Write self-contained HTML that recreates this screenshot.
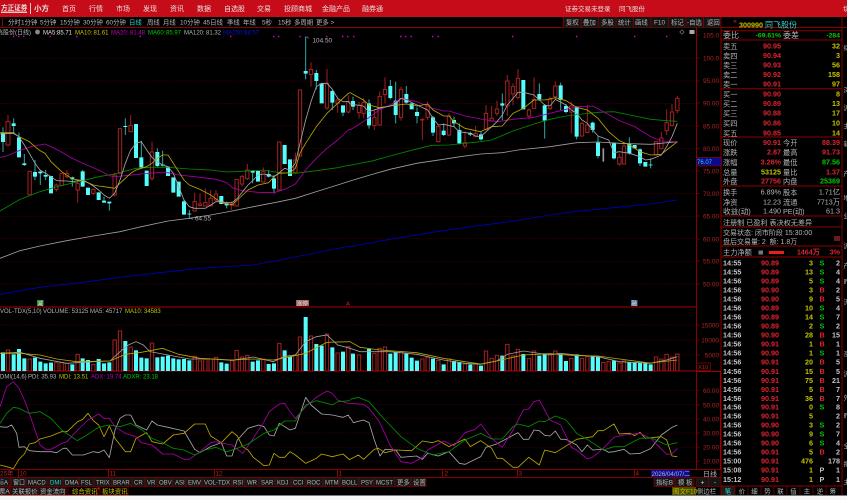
<!DOCTYPE html>
<html><head><meta charset="utf-8"><style>
html,body{margin:0;padding:0;background:#f6f6f6}
svg{display:block;position:absolute;left:0;top:0;filter:blur(.33px)}
text{font-family:"Liberation Sans","Noto Sans CJK SC",sans-serif;font-size:6.4px;fill:#b4b4b4;white-space:pre}
.w{fill:#e8e0e0}.g{fill:#b4b4b4}.r{fill:#dc2430}.y{fill:#c4c400}.l{fill:#00cc00}.c{fill:#35d0d0}.m{fill:#c000c0}.b{fill:#1010d0}.a{fill:#b02424}
.p text,text.p{font-size:7.2px}
.k{font-size:8px}
.e{text-anchor:end}.mid{text-anchor:middle}
.h text{font-size:6px}
.t text{font-weight:bold;fill:#c4c4c4}.t text.r{fill:#e02430}.t text.y{fill:#c4c400}.t text.l{fill:#00cc00}
polyline{stroke-width:2.5}
polyline[stroke="#b8b8b8"]{stroke:#a6a6a6}
polyline[stroke="#c4c4c4"]{stroke:#a0a0a0}
polyline[stroke="#b0b0b0"]{stroke:#a0a0a0}
</style></head><body>
<svg width="847" height="500" viewBox="0 0 847 500" xmlns="http://www.w3.org/2000/svg">
<rect width="847" height="495.5" fill="#000"/>
<rect y="495.5" width="847" height="5" fill="#f6f6f6"/>
<rect width="847" height="17" fill="#c60c18"/>
<!-- logo -->
<text x="1" y="10" class="w" style="font-size:6.6px;font-weight:bold">方正证券</text>
<rect x="1" y="11.5" width="26" height="1.500" fill="#e8c8c8"/>
<rect x="30" y="3" width="1" height="11" fill="#e8c8c8"/>
<text x="34" y="11" class="w" style="font-size:7.500px;font-weight:bold">小方</text>
<g>
<text x="62" y="11" class="w" style="font-size:7px">首页</text><text x="89" y="11" class="w" style="font-size:7px">行情</text><text x="116" y="11" class="w" style="font-size:7px">市场</text><text x="143" y="11" class="w" style="font-size:7px">发现</text><text x="170" y="11" class="w" style="font-size:7px">资讯</text><text x="197" y="11" class="w" style="font-size:7px">数据</text><text x="224" y="11" class="w" style="font-size:7px">自选股</text><text x="257" y="11" class="w" style="font-size:7px">交易</text><text x="284" y="11" class="w" style="font-size:7px">投顾商城</text><text x="322" y="11" class="w" style="font-size:7px">金融产品</text><text x="362" y="11" class="w" style="font-size:7px">融券通</text>
<text x="565" y="11" class="w" style="font-size:6.500px">证券交易未登录</text><text x="619" y="11" class="w" style="font-size:6.500px">同飞股份</text><text x="843" y="11" class="w" style="font-size:6.500px">切</text>
</g>
<!-- period row -->
<path d="M0 27.500H847" stroke="#8a0000" stroke-width="1"/>
<rect x="2" y="18" width="1" height="8" fill="#8a0000"/>
<g>
<text x="8" y="24.500">分时</text><text x="21" y="24.500">1分钟</text><text x="40" y="24.500">5分钟</text><text x="60" y="24.500">15分钟</text><text x="83" y="24.500">30分钟</text><text x="106" y="24.500">60分钟</text><text x="129" y="24.500" class="c">日线</text><text x="147" y="24.500">周线</text><text x="163" y="24.500">月线</text><text x="180" y="24.500">10分钟</text><text x="203" y="24.500">45日线</text><text x="227" y="24.500">季线</text><text x="243" y="24.500">年线</text><text x="262" y="24.500">5秒</text><text x="278" y="24.500">15秒</text><text x="294" y="24.500">多周期</text><text x="316" y="24.500">更多 &gt;</text>
</g>
<rect x="563" y="17" width="158" height="10.500" fill="#141414"/>
<path d="M563.500 17V27M581 17V27M598.500 17V27M616 17V27M633.500 17V27M651 17V27M668.500 17V27M686 17V27M703.500 17V27M721 17V40" stroke="#7a0000"/>
<g>
<text x="566" y="24.500">复权</text><text x="583" y="24.500">叠加</text><text x="601" y="24.500">多股</text><text x="618" y="24.500">统计</text><text x="635" y="24.500">画线</text><text x="654" y="24.500">F10</text><text x="671" y="24.500">标记</text><text x="687" y="24.500">-自选</text><text x="707" y="24.500">返回</text>
</g>
<!-- MA header -->
<g class="h">
<text x="-3" y="34.500">飞股份(日线)</text>
<text x="43" y="34.500" class="w">MA5:</text><text x="57" y="34.500" class="w">85.71</text>
<text x="75" y="34.500" class="y">MA10:</text><text x="93.500" y="34.500" class="y">81.61</text>
<text x="111" y="34.500" class="m">MA20:</text><text x="130" y="34.500" class="m">81.48</text>
<text x="148" y="34.500" class="l">MA60:</text><text x="166" y="34.500" class="l">85.97</text>
<text x="184" y="34.500">MA120:</text><text x="206" y="34.500">81.32</text>
<text x="223" y="34.500" class="b">MA250:</text><text x="244" y="34.500" class="b">68.57</text>
</g>
<circle cx="37.500" cy="32" r="2.400" fill="#888"/>
<path d="M682 29.800l2.200 2.200-2.200 2.200-2.200-2.200z" fill="none" stroke="#888" stroke-width=".6"/>
<rect x="689.500" y="30" width="5" height="4" fill="#aaa"/>
<!-- purple markers -->
<path d="M13 36.500h1.400M18 36.500h1.400M23 36.500h1.400M49.500 36.500h1.400M76 36.500h1.400M139.500 36.500h1.400M230 36.500h1.400M273 36.500h1.400M278 36.500h1.400M299.500 36.500h1.400M326 36.500h1.400M342 36.500h1.400M347 36.500h1.400M353 36.500h1.400M400 36.500h1.400M405 36.500h1.400M410.500 36.500h1.400M432 36.500h1.400M437.500 36.500h1.400M512 36.500h1.400M576 36.500h1.400M634 36.500h1.400M666 36.500h1.400" stroke="#d000d0" stroke-width="1.400"/>
<!-- grid -->
<g stroke="#4a0000" stroke-width=".7" stroke-dasharray="1 1.200">
<path d="M0 58.700H696M0 81H696M0 103.400H696M0 126H696M0 148.500H696M0 171H696M0 193.700H696M0 216.300H696M0 238.700H696M0 261.300H696M0 284H696"/>
<path d="M0 325H696M0 340H696M0 355H696"/>
<path d="M0 390.700H696M0 404.700H696M0 418.700H696M0 433H696M0 447.300H696M0 461.300H696"/>
</g>
<!-- candles left -->
<g transform="translate(0,30) scale(.33333)">
<path fill="none" stroke="#a31e1e" stroke-width="3" d="M24 255V350M169 460V485M201 420V445M233 450V518M280 475V495M344 428V500M392 255V305M456 335V452M584 488V545M600 490V530M616 475V530M632 480V528M648 480V515M694 515V540M726 435V470M742 402V450M790 412V458M886 368V430M933 97V170M981 117V240M1013 200V248M1045 195V250"/>
<path fill="none" stroke="#2ea8a8" stroke-width="3" d="M9 292V366M41 265V310M57 308V382M73 372V408M105 390V450M121 420V465M137 420V450M217 440V470M248 420V470M312 500V518M328 515V542M376 265V315M424 332V415M472 355V412M488 362V410M552 508V554M568 540V565M680 515V535M758 420V460M806 420V442M822 435V490M917 22V148M949 120V178M997 180V240M1029 226V258"/>
<path fill="#000" stroke="#a52222" stroke-width="3" d="M18 275h12v70h-12zM84 424h10v70h-10zM164 465h10v13h-10zM180 430h10v36h-10zM196 430h10v10h-10zM228 460h10v20h-10zM275 478h10v12h-10zM339 435h10v60h-10zM355 296h10v134h-10zM387 286h10v19h-10zM451 366h10v79h-10zM579 515h10v28h-10zM595 522h10v4h-10zM611 518h10v10h-10zM627 505h10v23h-10zM643 492h10v18h-10zM691 523h10v3h-10zM705 448h10v80h-10zM721 440h10v22h-10zM737 420h10v26h-10zM785 425h10v31h-10zM833 336h10v144h-10zM881 390h10v38h-10zM895 180h10v198h-10zM928 118h10v16h-10zM976 160h10v74h-10zM1008 210h10v10h-10zM1040 215h10v31h-10z"/>
<path fill="none" stroke="#54fcfc" stroke-width="12" d="M9 308V336M41 280V288M57 322V382M73 400V405M105 426V440M121 425V430M137 435V440M153 438V490M217 442V448M248 424V470M264 473V495M296 487V510M312 512V518M328 515V520M376 288V291M408 282V384M424 382V412M440 422V468M472 366V408M488 404V407M504 410V438M520 442V488M536 455V500M552 514V554M568 551V553M664 498V522M680 520V526M758 423V428M774 423V455M806 432V440M822 445V476M854 345V402M870 388V438M917 123V131M949 129V153M965 160V220M997 183V218M1029 226V248"/>
</g>
<!-- candles right -->
<g transform="translate(350,30) scale(.33333)">
<path fill="none" stroke="#a31e1e" stroke-width="3" d="M27 215V265M41 205V265M73 240V300M89 185V285M105 142V220M153 170V272M217 265V330M233 215V270M265 285V338M297 250V318M345 305V355M377 288V322M408 225V300M425 228V275M441 212V258M472 135V258M489 160V225M504 117V208M537 235V268M552 142V235M600 200V240M616 155V208M664 215V310M696 275V320M712 225V310M808 370V408M822 340V402M934 305V358M950 238V315M966 222V290M982 198V250"/>
<path fill="none" stroke="#2ea8a8" stroke-width="3" d="M9 200V240M57 208V296M121 150V208M137 155V280M169 168V220M201 232V280M249 258V318M281 280V318M312 260V290M328 280V342M361 305V318M393 305V332M457 190V270M568 160V212M584 222V326M632 158V240M648 222V250M680 228V328M728 275V308M744 320V385M792 338V388M838 322V374M870 355V408M902 385V415"/>
<path fill="none" stroke="#999" stroke-width="5" d="M760 355V395"/>
<path fill="#000" stroke="#a52222" stroke-width="3" d="M22 225h10v23h-10zM36 218h10v32h-10zM68 263h10v24h-10zM84 200h10v85h-10zM100 178h10v16h-10zM148 178h10v84h-10zM212 268h10v2h-10zM228 225h10v37h-10zM260 290h10v45h-10zM292 258h10v57h-10zM340 338h10v10h-10zM372 310h10v10h-10zM403 250h10v48h-10zM420 265h10v8h-10zM436 237h10v13h-10zM467 153h10v75h-10zM484 170h10v22h-10zM499 145h10v58h-10zM532 240h10v18h-10zM547 208h10v27h-10zM595 208h10v28h-10zM611 168h10v32h-10zM659 228h10v18h-10zM691 280h10v38h-10zM707 285h10v22h-10zM803 382h10v20h-10zM817 348h10v54h-10zM913 335h10v40h-10zM929 324h10v32h-10zM945 278h10v24h-10zM961 246h10v40h-10zM977 205h10v37h-10z"/>
<path fill="none" stroke="#54fcfc" stroke-width="12" d="M9 213V230M57 220V286M121 168V204M137 212V255M169 192V218M185 220V238M201 246V258M249 262V308M281 302V315M312 270V280M328 300V340M361 309V314M393 313V328M457 220V227M520 150V238M568 192V208M584 226V272M632 166V210M648 228V246M680 230V320M728 278V300M744 338V378M792 338V385M838 342V370M854 345V355M870 358V400M886 396V410M902 404V406"/>
</g>
<!-- MA lines -->
<g fill="none" stroke-linejoin="round">
<g transform="translate(0,30) scale(.33333)">
<polyline stroke="#0000b8" points="0,793 120,772 240,758 360,742 480,728 600,715 760,705 900,678 1050,648"/>
<polyline stroke="#c4c4c4" points="0,685 60,662 120,648 200,632 280,618 360,605 424,590 504,573 568,565 632,555 696,543 760,530 838,515 886,505 949,485 1013,465 1050,453"/>
<polyline stroke="#008a00" points="0,543 60,508 120,485 170,470 248,452 296,440 344,432 408,415 456,412 504,412 568,417 632,420 680,426 728,424 790,420 838,428 886,430 949,422 1013,413 1050,405"/>
<polyline stroke="#a800a8" points="0,382 20,378 57,362 100,348 135,342 170,358 217,385 260,405 296,420 328,437 344,440 376,437 424,432 472,428 504,428 536,435 600,442 648,448 680,458 700,475 728,482 774,487 822,488 854,478 886,462 917,420 949,385 981,355 1013,330 1045,300 1050,298"/>
<polyline stroke="#b8a800" points="0,308 40,308 57,320 88,335 105,350 120,362 135,370 153,395 185,425 217,447 248,452 280,465 296,468 312,470 344,475 360,460 376,445 392,430 408,420 424,415 440,410 456,400 472,385 488,375 504,375 520,400 536,425 552,450 568,465 600,478 632,495 664,518 696,524 712,510 728,495 744,480 774,465 806,458 822,440 838,430 870,428 886,415 900,370 917,340 949,290 981,250 1013,220 1045,190 1050,188"/>
<polyline stroke="#b8b8b8" points="0,312 40,310 57,320 73,345 88,370 105,400 120,420 153,440 170,452 201,453 217,455 233,452 248,450 264,458 280,468 296,480 312,495 328,505 344,490 360,450 376,400 392,360 408,340 424,335 440,360 456,382 472,395 488,405 504,410 520,430 536,470 552,510 568,530 584,535 600,535 616,535 632,525 648,515 664,515 680,518 696,518 712,505 728,485 744,465 760,450 774,435 790,432 806,435 822,440 838,428 854,415 870,420 886,400 900,340 917,270 933,215 949,170 965,160 981,160 997,178 1013,205 1029,215 1045,215 1050,222"/>
</g>
<g transform="translate(350,30) scale(.33333)">
<polyline stroke="#0000b8" points="0,650 120,628 240,608 360,590 480,575 600,555 680,544 760,536 900,522 982,510"/>
<polyline stroke="#c4c4c4" points="0,453 60,435 120,418 200,400 280,388 330,380 392,372 457,368 504,360 600,350 680,338 744,336 808,340 902,343 982,335"/>
<polyline stroke="#008a00" points="0,406 70,392 120,378 180,362 245,346 297,345 345,340 392,335 425,330 489,303 552,282 600,268 648,258 696,252 744,247 792,245 840,255 902,268 950,272 982,274"/>
<polyline stroke="#a800a8" points="0,300 40,275 88,240 120,225 153,205 200,215 248,235 281,243 297,243 345,258 392,267 441,275 489,268 520,265 552,262 600,250 648,238 680,230 728,228 760,245 808,272 854,290 902,320 934,333 982,335"/>
<polyline stroke="#b8a800" points="0,188 40,210 57,225 88,233 120,228 169,222 201,228 233,222 249,240 281,258 297,258 312,275 345,295 392,305 425,290 457,288 489,250 520,235 552,210 584,210 616,203 648,212 680,232 712,240 744,265 776,305 808,332 838,345 870,365 902,375 934,373 950,360 982,335"/>
<polyline stroke="#b8b8b8" points="0,222 40,228 57,245 88,235 120,228 137,222 153,205 169,210 201,225 233,240 249,265 265,285 281,283 312,290 328,305 361,310 377,318 392,320 408,305 425,290 441,275 457,255 472,225 489,205 504,187 520,187 552,195 568,210 584,225 600,228 616,208 648,225 664,240 680,250 696,270 712,280 728,300 744,318 776,330 792,368 808,365 838,370 870,380 886,390 902,388 934,375 950,350 966,320 982,280"/>
</g>
</g>
<!-- annotations -->
<path d="M305.500 38V37h2l1 1.500" stroke="#aaa" stroke-width=".6" fill="none"/>
<text x="312.500" y="42.500" class="g">104.50</text>
<path d="M189 218.500h2l2 .8" stroke="#aaa" stroke-width=".6" fill="none"/>
<text x="195" y="220.500" class="g">64.55</text>
<!-- volume pane -->
<g transform="translate(0,295) scale(.33333)">
<path d="M0 36H2088M0 228H2088" stroke="#8a0000" stroke-width="3.500"/>
<g fill="none" stroke="#a52222" stroke-width="3">
<path d="M19 228V165h10V228M84 228V192h10V228M164 228V203h10V228M180 228V203h10V228M196 228V205h10V228M228 228V178h10V228M275 228V208h10V228M339 228V135h10V228M355 228V108h10V228M387 228V156h10V228M451 228V144h10V228M579 228V184h10V228M595 228V198h10V228M611 228V192h10V228M627 228V192h10V228M643 228V187h10V228M691 228V197h10V228M705 228V166h10V228M721 228V186h10V228M737 228V181h10V228M785 228V192h10V228M833 228V145h10V228M881 228V180h10V228M895 228V126h10V228M928 228V123h10V228M976 228V117h10V228M1008 228V174h10V228M1040 228V155h10V228"/>
<path transform="translate(1050,0)" d="M22 228V180h10V228M68 228V175h10V228M84 228V160h10V228M100 228V156h10V228M148 228V170h10V228M212 228V192h10V228M228 228V188h10V228M260 228V196h10V228M292 228V192h10V228M340 228V207h10V228M372 228V205h10V228M403 228V168h10V228M420 228V190h10V228M436 228V181h10V228M467 228V148h10V228M484 228V183h10V228M499 228V163h10V228M532 228V191h10V228M547 228V168h10V228M595 228V178h10V228M611 228V168h10V228M659 228V190h10V228M691 228V190h10V228M707 228V185h10V228M755 228V202h10V228M771 228V200h10V228M803 228V204h10V228M817 228V198h10V228M913 228V186h10V228M929 228V192h10V228M945 228V178h10V228M961 228V186h10V228M977 228V177h10V228"/>
</g>
<path fill="none" stroke="#54fcfc" stroke-width="12" d="M9 172V228M41 178V228M57 162V228M73 190V228M105 188V228M121 200V228M137 205V228M153 203V228M217 208V228M248 190V228M264 195V228M296 192V228M312 205V228M328 202V228M376 138V228M408 166V228M424 188V228M440 190V228M472 187V228M488 185V228M504 182V228M520 190V228M536 193V228M552 192V228M568 196V228M664 202V228M680 206V228M758 200V228M774 196V228M806 207V228M822 205V228M854 166V228M870 185V228M917 66V228M949 147V228M965 152V228M997 157V228M1029 170V228"/>
<path transform="translate(1050,0)" fill="none" stroke="#54fcfc" stroke-width="12" d="M9 176V228M57 162V228M121 176V228M137 172V228M169 176V228M185 188V228M201 197V228M249 191V228M281 208V228M312 198V228M328 201V228M361 208V228M393 212V228M457 182V228M520 177V228M568 182V228M584 175V228M632 178V228M648 198V228M680 178V228M728 184V228M744 186V228M792 197V228M838 202V228M854 202V228M870 202V228M886 205V228M902 208V228"/>
<g fill="none">
<polyline stroke="#b0b0b0" points="0,175 60,172 120,190 200,205 280,200 330,198 360,170 385,150 408,140 430,150 450,170 504,180 568,192 632,192 696,196 760,186 820,200 854,184 886,180 917,140 949,125 981,120 1013,150 1050,160 1080,170 1110,170 1170,170 1250,178 1330,195 1395,205 1442,208 1490,198 1522,178 1570,168 1650,180 1680,175 1730,180 1794,185 1858,200 1950,205 2000,195 2032,185"/>
<polyline stroke="#b8a800" points="0,175 60,175 120,180 170,192 230,200 330,198 376,178 424,172 488,160 536,178 600,190 696,195 760,192 820,195 870,185 917,175 949,158 981,142 1050,140 1080,157 1140,165 1250,173 1330,190 1395,200 1442,207 1490,198 1570,180 1650,176 1730,182 1794,183 1858,192 1950,204 2032,195"/>
</g>
</g>
<g class="h">
<text x="0" y="313.200">VOL-TDX(5,10)</text><text x="43" y="313.200">VOLUME: 53125</text><text x="90" y="313.200">MA5: 45717</text><text x="125" y="313.200" class="y">MA10: 34583</text>
</g>
<!-- markers -->
<rect x="37" y="300" width="6.500" height="6" fill="#2c8a3c"/><text x="37.500" y="305.500" class="w" style="font-size:5.500px">减</text>
<rect x="296" y="300" width="13" height="6" fill="#9a6060"/><text x="296.500" y="305.500" class="w" style="font-size:5.800px">涨停</text>
<text x="346" y="305.500" class="r" style="font-size:5.500px">A</text>
<rect x="631" y="300" width="6.500" height="6" fill="#4a6c9c"/><text x="631.500" y="305.500" class="w" style="font-size:5.500px">融</text>
<!-- DMI -->
<g class="h">
<text x="0" y="378.300">DMI(14,6)</text><text x="28" y="378.300">PDI: 35.93</text><text x="59" y="378.300" class="y">MDI: 13.51</text><text x="91" y="378.300" class="m">ADX: 19.74</text><text x="123" y="378.300" class="l">ADXR: 23.18</text>
</g>
<g fill="none" stroke-linejoin="round">
<g transform="translate(0,370) scale(.33333)">
<polyline stroke="#b8b8b8" points="0,170 20,172 35,165 50,190 57,232 73,230 88,242 120,245 153,245 170,248 190,235 200,235 217,255 250,255 280,245 296,248 312,240 328,263 345,180 360,145 376,135 392,135 408,165 440,180 456,153 472,165 504,172 552,183 568,210 584,238 600,248 632,230 664,218 680,258 696,258 712,210 744,175 776,165 792,170 808,195 822,198 838,160 870,180 886,175 917,82 933,105 965,132 997,135 1029,142 1045,135 1050,145"/>
<polyline stroke="#b8a800" points="0,285 20,290 40,296 57,268 73,252 88,222 105,218 120,207 153,198 185,185 201,185 217,170 233,155 248,148 264,130 280,152 296,165 312,200 328,168 345,205 376,245 392,245 408,205 440,188 456,215 488,222 520,195 552,190 584,162 616,162 632,198 664,218 696,185 712,198 728,230 744,240 760,262 792,287 808,285 822,250 838,262 854,262 870,245 886,255 917,280 949,265 965,252 997,260 1029,252 1050,270"/>
<polyline stroke="#a800a8" points="0,110 20,50 40,35 57,55 73,90 88,130 105,180 120,225 137,238 153,238 185,220 201,215 233,180 264,150 296,132 312,145 328,145 345,170 376,190 408,200 424,218 456,225 488,252 520,252 552,268 568,268 600,245 632,218 648,215 680,222 696,225 728,250 760,205 792,155 808,125 838,102 854,100 870,125 886,145 917,110 949,82 981,63 997,70 1013,90 1050,102"/>
<polyline stroke="#009000" points="0,160 20,130 40,112 57,115 88,130 120,125 153,145 185,180 232,212 264,193 296,172 328,165 360,170 392,160 424,178 456,205 488,218 520,235 552,240 584,255 616,240 648,232 680,245 712,235 744,222 792,190 822,180 854,153 886,153 917,105 949,92 981,100 997,105 1013,95 1050,92"/>
</g>
<g transform="translate(350,370) scale(.33333)">
<polyline stroke="#b8b8b8" points="0,142 10,158 40,150 57,158 73,210 90,258 105,238 137,240 153,262 200,258 217,268 233,250 265,258 297,245 328,280 345,283 392,260 408,232 440,222 472,205 504,188 520,208 536,208 552,180 568,182 584,196 600,198 616,183 632,208 648,208 680,225 696,245 712,225 728,240 760,238 776,247 792,245 822,238 840,252 870,250 902,236 934,195 966,172 982,165"/>
<polyline stroke="#b8a800" points="0,268 25,255 41,268 73,238 85,235 105,248 137,240 185,242 217,213 248,218 265,212 297,230 345,207 361,230 392,212 425,235 441,265 457,265 489,292 504,292 536,262 568,285 584,240 616,248 680,208 728,200 744,182 760,182 792,162 808,192 840,190 854,197 870,187 886,205 934,200 950,210 966,258 982,260"/>
<polyline stroke="#a800a8" points="0,100 40,103 57,115 88,155 120,225 153,275 185,280 217,262 233,240 281,213 312,228 345,188 376,178 392,162 425,205 457,232 489,180 520,120 536,117 552,95 568,90 600,150 632,165 664,232 680,240 712,267 728,262 760,235 792,202 822,195 870,190 902,205 950,253 966,252 982,235"/>
<polyline stroke="#009000" points="0,88 25,82 57,95 105,150 153,200 201,235 248,255 297,245 345,210 392,190 425,207 457,207 489,170 504,162 536,170 568,153 584,155 616,138 648,150 680,190 712,208 760,240 792,230 822,230 870,205 902,203 950,225 982,218"/>
</g>
</g>
<!-- frames -->
<path d="M0 469.500H721M0 477.500H696" stroke="#8a0000" stroke-width="1"/>
<path d="M696.500 27V469M721 27V495M842 17V495" stroke="#8a0000" stroke-width="1"/>
<path d="M696.500 371.500H720.500V469" stroke="#a00000" fill="none" stroke-width="1"/>
<path d="M696 35h3.500M696 58h3.500M696 81h3.500M696 103h3.500M696 126h3.500M696 148.500h3.500M696 171h3.500M696 193.500h3.500M696 216h3.500M696 239h3.500M696 261h3.500M696 284h3.500M696 325h3.500M696 340h3.500M696 355h3.500M696 390.500h3.500M696 405h3.500M696 419h3.500M696 433h3.500M696 447h3.500M696 461h3.500" stroke="#8a0000" stroke-width=".8"/>
<!-- axis labels -->
<g>
<text x="719" y="37.500" class="a e">105.0</text><text x="719" y="60.500" class="a e">100.0</text><text x="719" y="83" class="a e">95.00</text><text x="719" y="105.500" class="a e">90.00</text><text x="719" y="128.500" class="a e">85.00</text><text x="719" y="151" class="a e">80.00</text><text x="719" y="173.500" class="a e">75.00</text><text x="719" y="196" class="a e">70.00</text><text x="719" y="218.500" class="a e">65.00</text><text x="719" y="241.500" class="a e">60.00</text><text x="719" y="263.500" class="a e">55.00</text><text x="719" y="286.500" class="a e">50.00</text>
<text x="719" y="327.500" class="a e">15000</text><text x="719" y="342.500" class="a e">10000</text><text x="719" y="357.500" class="a e">5000</text>
<text x="719" y="393" class="a e">60.00</text><text x="719" y="407.500" class="a e">50.00</text><text x="719" y="421.500" class="a e">40.00</text><text x="719" y="435.500" class="a e">30.00</text><text x="719" y="449.500" class="a e">20.00</text><text x="719" y="463.500" class="a e">10.00</text>
</g>
<rect x="696.500" y="157.500" width="25" height="8.500" fill="#0a0a8c" stroke="#8a0000" stroke-width=".8"/><text x="697" y="164" class="c" style="font-size:6px">76.07</text>
<rect x="696.500" y="363" width="14" height="7.500" fill="none" stroke="#8a0000" stroke-width=".8"/><text x="698" y="369" class="a" style="font-size:5.800px">X10</text>
<!-- time axis -->
<path d="M18.500 470V477M108.500 470V477M214.500 470V477M337.500 470V477M442.500 470V477M517.500 470V477M634.500 470V477" stroke="#8a0000"/>
<text x="0" y="475.500" class="a">25年</text><text x="19.500" y="475.500" class="a">10</text><text x="109.500" y="475.500" class="a">11</text><text x="215.500" y="475.500" class="a">12</text><text x="338.500" y="475.500" class="a">1</text><text x="444.500" y="475.500" class="a">2</text><text x="518.500" y="475.500" class="a">3</text><text x="635.500" y="475.500" class="a">4</text>
<rect x="651" y="470" width="38.500" height="7" fill="#0c0c9c"/><text x="651.500" y="476" class="g" style="font-size:6.200px">2026/04/07/二</text>
<text x="703" y="476.500" class="g" style="font-size:7px">日线</text>
<!-- formula tabs -->
<g fill="#161616" stroke="#7a0000" stroke-width=".8">
<rect x="-1" y="477.500" width="11" height="9"/><rect x="11" y="477.500" width="15" height="9"/><rect x="26" y="477.500" width="22" height="9"/><rect x="48" y="477.500" width="15" height="9"/><rect x="63" y="477.500" width="16" height="9"/><rect x="79" y="477.500" width="15" height="9"/><rect x="94" y="477.500" width="18" height="9"/><rect x="112" y="477.500" width="20" height="9"/><rect x="132" y="477.500" width="13" height="9"/><rect x="145" y="477.500" width="12" height="9"/><rect x="157" y="477.500" width="16" height="9"/><rect x="173" y="477.500" width="13" height="9"/><rect x="186" y="477.500" width="16" height="9"/><rect x="202" y="477.500" width="30" height="9"/><rect x="232" y="477.500" width="13" height="9"/><rect x="245" y="477.500" width="14" height="9"/><rect x="259" y="477.500" width="16" height="9"/><rect x="275" y="477.500" width="16" height="9"/><rect x="291" y="477.500" width="15" height="9"/><rect x="306" y="477.500" width="17" height="9"/><rect x="323" y="477.500" width="17" height="9"/><rect x="340" y="477.500" width="19" height="9"/><rect x="359" y="477.500" width="15" height="9"/><rect x="374" y="477.500" width="21" height="9"/><rect x="395" y="477.500" width="16" height="9"/><rect x="411" y="477.500" width="15" height="9"/>
<rect x="654" y="477.500" width="20" height="9"/><rect x="675" y="477.500" width="19" height="9"/><rect x="696" y="477.500" width="12.500" height="9"/><rect x="708.500" y="477.500" width="12.500" height="9"/>
</g>
<g style="font-size:6px">
<text x="-2" y="484.500" style="font-size:6px">标A</text><text x="13" y="484.500" style="font-size:6px">窗口</text><text x="28" y="484.500" style="font-size:6px">MACD</text><text x="50" y="484.500" class="c" style="font-size:6px">DMI</text><text x="65" y="484.500" style="font-size:6px">DMA</text><text x="81" y="484.500" style="font-size:6px">FSL</text><text x="96" y="484.500" style="font-size:6px">TRIX</text><text x="113" y="484.500" style="font-size:6px">BRAR</text><text x="134" y="484.500" style="font-size:6px">CR</text><text x="147" y="484.500" style="font-size:6px">VR</text><text x="159" y="484.500" style="font-size:6px">OBV</text><text x="175" y="484.500" style="font-size:6px">ASI</text><text x="188" y="484.500" style="font-size:6px">EMV</text><text x="204" y="484.500" style="font-size:6px">VOL-TDX</text><text x="233" y="484.500" style="font-size:6px">RSI</text><text x="247" y="484.500" style="font-size:6px">WR</text><text x="261" y="484.500" style="font-size:6px">SAR</text><text x="277" y="484.500" style="font-size:6px">KDJ</text><text x="293" y="484.500" style="font-size:6px">CCI</text><text x="307" y="484.500" style="font-size:6px">ROC</text><text x="325" y="484.500" style="font-size:6px">MTM</text><text x="342" y="484.500" style="font-size:6px">BOLL</text><text x="361" y="484.500" style="font-size:6px">PSY</text><text x="376" y="484.500" style="font-size:6px">MCST</text><text x="397" y="484.500">更多</text><text x="413" y="484.500">设置</text>
<text x="656" y="484.500">指标B</text><text x="678" y="484.500">模 板</text><text x="702.500" y="484.500" class="mid w">+</text><text x="715" y="484.500" class="mid w">-</text>
</g>
<!-- bottom tabs -->
<g fill="#141414" stroke="#7a0000" stroke-width=".8">
<rect x="-1" y="486.500" width="10" height="8.500"/><rect x="10" y="486.500" width="28" height="8.500"/><rect x="38" y="486.500" width="28" height="8.500"/>
</g>
<g fill="#000" stroke="#7a0000" stroke-width=".8"><rect x="68" y="486.500" width="30" height="8.500"/><rect x="100" y="486.500" width="28" height="8.500"/></g>
<circle cx="98.500" cy="488.500" r="1" fill="#ff1010"/>
<text x="-1" y="493.300">票A</text><text x="12" y="493.300">关联报价</text><text x="40" y="493.300">资金流向</text><text x="72" y="493.300" class="y">综合资讯</text><text x="102" y="493.300" class="y">板块资讯</text>
<rect x="672" y="487" width="24" height="8" fill="#4a4a00"/><text x="673" y="493.300" class="y" style="font-size:6.500px">图文F10</text>
<text x="697" y="493.300">侧边栏</text>
<!-- right panel -->
<path d="M721 30.800H842M721 40H842M721 88.800H842M721 137H842M721 186H842M721 216H842M721 227H842M721 246H842M721 257H842M721 486H842" stroke="#8a0000" stroke-width="1"/>
<text x="733.500" y="23" class="r" style="font-size:4.500px">R</text>
<text x="739" y="27.500" class="y" style="font-size:7.200px;font-weight:bold">300990</text>
<text x="765" y="27.500" class="c" style="font-size:8px">同飞股份</text>
<text x="723" y="38" class="k">委比</text><text x="781" y="37.500" class="l e" style="font-size:6.800px;font-weight:bold">-69.61%</text><text x="783" y="38" class="k">委差</text><text x="840" y="37.500" class="l e" style="font-size:6.800px;font-weight:bold">-284</text>
<g class="p">
<text x="723" y="49" class="k">卖五</text><text x="763" y="48.500" class="r" style="font-weight:bold">90.95</text><text x="840" y="48.500" class="y e" style="font-weight:bold">32</text>
<text x="723" y="58.500" class="k">卖四</text><text x="763" y="58" class="r" style="font-weight:bold">90.94</text><text x="840" y="58" class="y e" style="font-weight:bold">3</text>
<text x="723" y="68" class="k">卖三</text><text x="763" y="67.500" class="r" style="font-weight:bold">90.93</text><text x="840" y="67.500" class="y e" style="font-weight:bold">56</text>
<text x="723" y="77.500" class="k">卖二</text><text x="763" y="77" class="r" style="font-weight:bold">90.92</text><text x="840" y="77" class="y e" style="font-weight:bold">158</text>
<text x="723" y="87" class="k">卖一</text><text x="763" y="86.500" class="r" style="font-weight:bold">90.91</text><text x="840" y="86.500" class="y e" style="font-weight:bold">97</text>
<text x="723" y="97" class="k">买一</text><text x="763" y="96.500" class="r" style="font-weight:bold">90.90</text><text x="840" y="96.500" class="y e" style="font-weight:bold">8</text>
<text x="723" y="106.500" class="k">买二</text><text x="763" y="106" class="r" style="font-weight:bold">90.89</text><text x="840" y="106" class="y e" style="font-weight:bold">13</text>
<text x="723" y="116" class="k">买三</text><text x="763" y="115.500" class="r" style="font-weight:bold">90.88</text><text x="840" y="115.500" class="y e" style="font-weight:bold">17</text>
<text x="723" y="126" class="k">买四</text><text x="763" y="125.500" class="r" style="font-weight:bold">90.86</text><text x="840" y="125.500" class="y e" style="font-weight:bold">10</text>
<text x="723" y="136" class="k">买五</text><text x="763" y="135.500" class="r" style="font-weight:bold">90.85</text><text x="840" y="135.500" class="y e" style="font-weight:bold">14</text>
<text x="723" y="145.500" class="k">现价</text><text x="781" y="145" class="r e" style="font-weight:bold">90.91</text><text x="783" y="145.500" class="k">今开</text><text x="840" y="145" class="r e" style="font-weight:bold">88.39</text>
<text x="723" y="155" class="k">涨跌</text><text x="781" y="154.500" class="r e" style="font-weight:bold">2.87</text><text x="783" y="155" class="k">最高</text><text x="840" y="154.500" class="r e" style="font-weight:bold">91.73</text>
<text x="723" y="165" class="k">涨幅</text><text x="781" y="164.500" class="r e" style="font-weight:bold">3.26%</text><text x="783" y="165" class="k">最低</text><text x="840" y="164.500" class="l e" style="font-weight:bold">87.56</text>
<text x="723" y="175" class="k">总量</text><text x="781" y="174.500" class="y e" style="font-weight:bold">53125</text><text x="783" y="175" class="k">量比</text><text x="840" y="174.500" class="r e" style="font-weight:bold">1.37</text>
<text x="723" y="184" class="k">外盘</text><text x="781" y="183.500" class="r e" style="font-weight:bold">27756</text><text x="783" y="184" class="k">内盘</text><text x="840" y="183.500" class="l e" style="font-weight:bold">25369</text>
<text x="723" y="195" class="k">换手</text><text x="781" y="194.500" class="g e">6.89%</text><text x="783" y="195" class="k">股本</text><text x="840" y="194.500" class="g e">1.71亿</text>
<text x="723" y="205" class="k">净资</text><text x="781" y="204.500" class="g e">12.23</text><text x="783" y="205" class="k">流通</text><text x="840" y="204.500" class="g e">7713万</text>
<text x="723" y="214" class="k" style="font-size:7.600px">收益(动)</text><text x="781" y="213.500" class="g e">1.490</text><text x="783" y="214">PE(动)</text><text x="840" y="213.500" class="g e">61.3</text>
<text x="723" y="225" style="font-size:7.100px">注册制 已盈利 表决权无差异</text>
<text x="723" y="235" style="font-size:7px">交易状态: 闭市阶段 15:30:00</text>
<text x="723" y="244" style="font-size:7px">盘后交易量: 2  额: 1.8万</text>
<text x="723" y="255" class="k">主力净额</text>
<rect x="758.500" y="250.500" width="4.500" height="4" fill="#777"/>
<rect x="769" y="251" width="15" height="3" fill="#f01c1c"/>
<text x="820" y="254.500" class="r e" style="font-weight:bold">1464万</text><text x="840" y="254.500" class="r e" style="font-weight:bold">3%</text>
<rect x="834" y="236" width="6" height="5" fill="#6a1a1a"/>
</g>
<g class="p t">
<text x="723" y="265.500">14:55</text><text x="761" y="265.500" class="r">90.89</text><text x="813" y="265.500" class="y e">3</text><text x="819.500" y="265.500" class="l">S</text><text x="840" y="265.500" class="e">2</text>
<text x="723" y="274.500">14:55</text><text x="761" y="274.500" class="r">90.89</text><text x="813" y="274.500" class="y e">13</text><text x="819.500" y="274.500" class="l">S</text><text x="840" y="274.500" class="e">4</text>
<text x="723" y="283.500">14:56</text><text x="761" y="283.500" class="r">90.89</text><text x="813" y="283.500" class="y e">5</text><text x="819.500" y="283.500" class="l">S</text><text x="840" y="283.500" class="e">4</text>
<text x="723" y="292.500">14:56</text><text x="761" y="292.500" class="r">90.90</text><text x="813" y="292.500" class="y e">3</text><text x="819.500" y="292.500" class="r">B</text><text x="840" y="292.500" class="e">2</text>
<text x="723" y="301.500">14:56</text><text x="761" y="301.500" class="r">90.90</text><text x="813" y="301.500" class="y e">9</text><text x="819.500" y="301.500" class="r">B</text><text x="840" y="301.500" class="e">5</text>
<text x="723" y="310.500">14:56</text><text x="761" y="310.500" class="r">90.89</text><text x="813" y="310.500" class="y e">10</text><text x="819.500" y="310.500" class="l">S</text><text x="840" y="310.500" class="e">4</text>
<text x="723" y="319.500">14:56</text><text x="761" y="319.500" class="r">90.89</text><text x="813" y="319.500" class="y e">14</text><text x="819.500" y="319.500" class="l">S</text><text x="840" y="319.500" class="e">7</text>
<text x="723" y="328.500">14:56</text><text x="761" y="328.500" class="r">90.89</text><text x="813" y="328.500" class="y e">2</text><text x="819.500" y="328.500" class="l">S</text><text x="840" y="328.500" class="e">2</text>
<text x="723" y="337.500">14:56</text><text x="761" y="337.500" class="r">90.90</text><text x="813" y="337.500" class="y e">28</text><text x="819.500" y="337.500" class="r">B</text><text x="840" y="337.500" class="e">15</text>
<text x="723" y="346.500">14:56</text><text x="761" y="346.500" class="r">90.91</text><text x="813" y="346.500" class="y e">1</text><text x="819.500" y="346.500" class="r">B</text><text x="840" y="346.500" class="e">1</text>
<text x="723" y="355.500">14:56</text><text x="761" y="355.500" class="r">90.90</text><text x="813" y="355.500" class="y e">1</text><text x="819.500" y="355.500" class="l">S</text><text x="840" y="355.500" class="e">1</text>
<text x="723" y="364.500">14:56</text><text x="761" y="364.500" class="r">90.91</text><text x="813" y="364.500" class="y e">20</text><text x="819.500" y="364.500" class="r">B</text><text x="840" y="364.500" class="e">5</text>
<text x="723" y="374">14:56</text><text x="761" y="374" class="r">90.91</text><text x="813" y="374" class="y e">15</text><text x="819.500" y="374" class="r">B</text><text x="840" y="374" class="e">5</text>
<text x="723" y="383">14:56</text><text x="761" y="383" class="r">90.91</text><text x="813" y="383" class="y e">75</text><text x="819.500" y="383" class="r">B</text><text x="840" y="383" class="e">21</text>
<text x="723" y="392">14:56</text><text x="761" y="392" class="r">90.91</text><text x="813" y="392" class="y e">5</text><text x="819.500" y="392" class="r">B</text><text x="840" y="392" class="e">7</text>
<text x="723" y="401">14:56</text><text x="761" y="401" class="r">90.91</text><text x="813" y="401" class="y e">36</text><text x="819.500" y="401" class="r">B</text><text x="840" y="401" class="e">7</text>
<text x="723" y="409.500">14:56</text><text x="761" y="409.500" class="r">90.91</text><text x="813" y="409.500" class="y e">0</text><text x="819.500" y="409.500" class="l">S</text><text x="840" y="409.500" class="e">8</text>
<text x="723" y="418.500">14:56</text><text x="761" y="418.500" class="r">90.91</text><text x="813" y="418.500" class="y e">5</text><text x="840" y="418.500" class="e">2</text>
<text x="723" y="427.500">14:56</text><text x="761" y="427.500" class="r">90.90</text><text x="813" y="427.500" class="y e">3</text><text x="819.500" y="427.500" class="l">S</text><text x="840" y="427.500" class="e">2</text>
<text x="723" y="436.500">14:56</text><text x="761" y="436.500" class="r">90.90</text><text x="813" y="436.500" class="y e">9</text><text x="819.500" y="436.500" class="l">S</text><text x="840" y="436.500" class="e">7</text>
<text x="723" y="445.500">14:56</text><text x="761" y="445.500" class="r">90.90</text><text x="813" y="445.500" class="y e">6</text><text x="819.500" y="445.500" class="l">S</text><text x="840" y="445.500" class="e">4</text>
<text x="723" y="454.500">14:56</text><text x="761" y="454.500" class="r">90.91</text><text x="813" y="454.500" class="y e">5</text><text x="819.500" y="454.500" class="r">B</text><text x="840" y="454.500" class="e">2</text>
<text x="723" y="463.500">15:00</text><text x="761" y="463.500" class="r">90.91</text><text x="813" y="463.500" class="y e">476</text><text x="840" y="463.500" class="e">178</text>
<text x="723" y="472.500">15:08</text><text x="761" y="472.500" class="r">90.91</text><text x="813" y="472.500" class="y e">1</text><text x="819.500" y="472.500">P</text><text x="840" y="472.500" class="e">1</text>
<text x="723" y="482">15:12</text><text x="761" y="482" class="r">90.91</text><text x="813" y="482" class="y e">1</text><text x="819.500" y="482">P</text><text x="840" y="482" class="e">1</text>
</g>
<!-- tick tabs -->
<rect x="721.500" y="486.500" width="13.500" height="8.500" fill="#1c1c1c"/>
<path d="M735 486V495M748 486V495M761 486V495M774 486V495M787 486V495M800 486V495M813 486V495M826 486V495" stroke="#7a0000" stroke-width=".8"/>
<g>
<text x="728" y="493.300" class="mid c">笔</text><text x="742" y="493.300" class="mid">价</text><text x="754.500" y="493.300" class="mid">细</text><text x="767.500" y="493.300" class="mid">势</text><text x="780.500" y="493.300" class="mid">联</text><text x="793.500" y="493.300" class="mid">值</text><text x="807" y="493.300" class="mid">主</text><text x="820" y="493.300" class="mid">逆</text><text x="833" y="493.300" class="mid">筹</text>
</g>
<!-- clipped right strip -->
<g>
<text x="843.500" y="50">综</text><text x="843.500" y="92">深</text><text x="843.500" y="110">沪</text><text x="843.500" y="128">主</text><text x="843.500" y="146">新</text><text x="843.500" y="176">产</text><text x="843.500" y="200">地</text><text x="843.500" y="218">业</text><text x="843.500" y="248">沪</text><text x="843.500" y="268">产</text><text x="843.500" y="284">昨</text><text x="843.500" y="304">流</text><text x="843.500" y="356">涨</text><text x="843.500" y="376">沪</text><text x="843.500" y="400">外</text><text x="843.500" y="418">昨</text><text x="843.500" y="448">全</text><text x="843.500" y="466">扣</text><text x="843.500" y="484">主</text>
</g>
<rect x="0" y="495.500" width="847" height="5" fill="#f6f6f6"/>
</svg>
</body></html>
